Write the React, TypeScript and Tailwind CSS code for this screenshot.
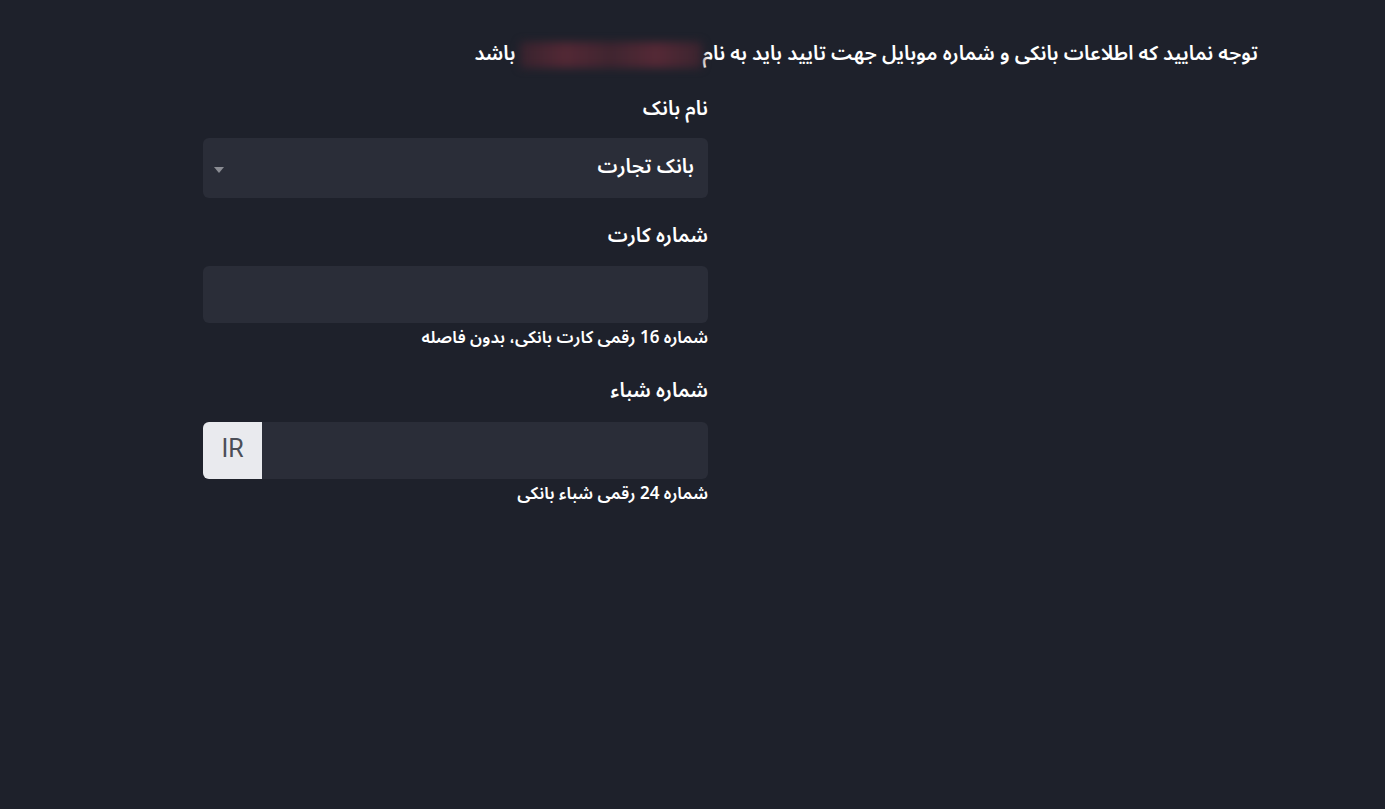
import { useState } from 'react';

const fontStack = { fontFamily: '"Noto Sans Arabic", "DejaVu Sans", "Noto Sans", sans-serif' };

export default function App() {
  const [bank, setBank] = useState('tejarat');

  return (
    <div dir="rtl" className="min-h-screen w-full bg-[#1e212b] text-white" style={fontStack}>
      <div className="pr-[127px] pt-[39px]">
        {/* Notice line — owner name is blurred out */}
        <p className="text-[20px] leading-[30px] font-semibold text-white">
          توجه نمایید که اطلاعات بانکی و شماره موبایل جهت تایید باید به نام
          <span
            aria-hidden
            className="inline-block align-middle w-[182px] h-[26px] mr-[1px] ml-[4px] rounded-sm blur-[4px] bg-[linear-gradient(90deg,#37232e,#532835,#3f2530,#552936,#3a242f)]"
          />
          باشد
        </p>

        <form className="w-[505px] mr-[550px]">
          {/* Bank select */}
          <label className="block mt-[25px] mb-[14px] text-[20px] leading-[30px] font-semibold">نام بانک</label>
          <div className="relative h-[60px] rounded-md bg-[#2a2d38]">
            <select
              value={bank}
              onChange={(e) => setBank(e.target.value)}
              className="h-full w-full appearance-none bg-transparent pr-[14px] pl-10 pb-[3px] text-[20px] font-semibold text-white outline-none"
              style={fontStack}
            >
              <option value="tejarat" className="bg-[#2a2d38]">بانک تجارت</option>
              <option value="melli" className="bg-[#2a2d38]">بانک ملی</option>
              <option value="mellat" className="bg-[#2a2d38]">بانک ملت</option>
            </select>
            <span className="pointer-events-none absolute left-[11px] top-[29px] h-0 w-0 border-x-[5px] border-t-[6px] border-x-transparent border-t-[#8a8c93]" />
          </div>

          {/* Card number */}
          <label className="block mt-[23px] mb-[15px] text-[20px] leading-[30px] font-semibold">شماره کارت</label>
          <input
            type="text"
            className="block h-[57px] w-full rounded-md bg-[#2a2d38] px-[14px] text-[18px] text-white outline-none"
          />
          <p className="mt-[2px] text-[17px] leading-[26px] font-semibold">شماره 16 رقمی کارت بانکی، بدون فاصله</p>

          {/* IBAN */}
          <label className="block mt-[25px] mb-[16px] text-[20px] leading-[30px] font-semibold">شماره شباء</label>
          <div dir="ltr" className="flex h-[57px] w-full overflow-hidden rounded-md bg-[#2a2d38]">
            <span
              className="flex w-[59px] shrink-0 items-center justify-center bg-[#e9eaee] pb-[4px] text-[25px] text-[#4b4e57]"
              style={{ fontFamily: 'Roboto, "Liberation Sans", sans-serif' }}
            >
              IR
            </span>
            <input type="text" className="h-full min-w-0 flex-1 bg-transparent px-[14px] text-[18px] text-white outline-none" />
          </div>
          <p className="mt-[2px] text-[17px] leading-[26px] font-semibold">شماره 24 رقمی شباء بانکی</p>
        </form>
      </div>
    </div>
  );
}
